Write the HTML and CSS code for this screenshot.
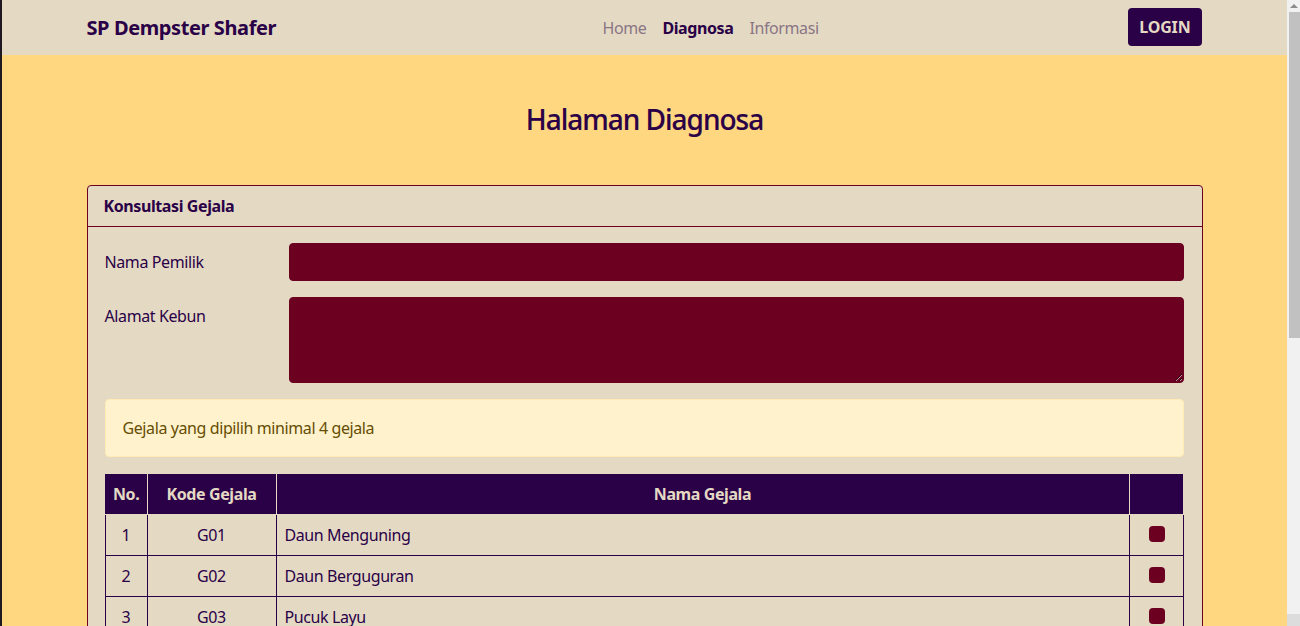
FILE: index.html
```html
<!DOCTYPE html>
<html lang="id">
<head>
<meta charset="utf-8">
<title>SP Dempster Shafer - Diagnosa</title>
<link rel="stylesheet" href="styles.css">
</head>
<body>
<nav class="navbar">
  <div class="container nav-inner">
    <a class="brand" href="#">SP Dempster Shafer</a>
    <ul class="nav-links">
      <li><a href="#">Home</a></li>
      <li><a href="#" class="active">Diagnosa</a></li>
      <li><a href="#">Informasi</a></li>
    </ul>
    <a class="btn-login" href="#">LOGIN</a>
  </div>
</nav>

<main class="page">
  <div class="container">
    <h1 class="page-title">Halaman Diagnosa</h1>

    <section class="card">
      <div class="card-header">Konsultasi Gejala</div>
      <div class="card-body">
        <div class="form-row">
          <label class="form-label" for="nama">Nama Pemilik</label>
          <input class="form-control" id="nama" type="text">
        </div>
        <div class="form-row">
          <label class="form-label" for="alamat">Alamat Kebun</label>
          <textarea class="form-control textarea" id="alamat"></textarea>
        </div>

        <div class="alert">Gejala yang dipilih minimal 4 gejala</div>

        <table class="table">
          <colgroup>
            <col class="col-no">
            <col class="col-kode">
            <col>
            <col class="col-check">
          </colgroup>
          <thead>
            <tr>
              <th>No.</th>
              <th>Kode Gejala</th>
              <th>Nama Gejala</th>
              <th></th>
            </tr>
          </thead>
          <tbody>
            <tr><td class="c">1</td><td class="c">G01</td><td>Daun Menguning</td><td class="c"><span class="check"></span></td></tr>
            <tr><td class="c">2</td><td class="c">G02</td><td>Daun Berguguran</td><td class="c"><span class="check"></span></td></tr>
            <tr><td class="c">3</td><td class="c">G03</td><td>Pucuk Layu</td><td class="c"><span class="check"></span></td></tr>
            <tr><td class="c">4</td><td class="c">G04</td><td>Batang Membusuk</td><td class="c"><span class="check"></span></td></tr>
            <tr><td class="c">5</td><td class="c">G05</td><td>Akar Membusuk</td><td class="c"><span class="check"></span></td></tr>
            <tr><td class="c">6</td><td class="c">G06</td><td>Bercak Coklat pada Daun</td><td class="c"><span class="check"></span></td></tr>
            <tr><td class="c">7</td><td class="c">G07</td><td>Buah Rontok</td><td class="c"><span class="check"></span></td></tr>
            <tr><td class="c">8</td><td class="c">G08</td><td>Daun Menggulung</td><td class="c"><span class="check"></span></td></tr>
            <tr><td class="c">9</td><td class="c">G09</td><td>Ranting Mengering</td><td class="c"><span class="check"></span></td></tr>
            <tr><td class="c">10</td><td class="c">G10</td><td>Kulit Batang Pecah</td><td class="c"><span class="check"></span></td></tr>
            <tr><td class="c">11</td><td class="c">G11</td><td>Buah Busuk</td><td class="c"><span class="check"></span></td></tr>
            <tr><td class="c">12</td><td class="c">G12</td><td>Tanaman Kerdil</td><td class="c"><span class="check"></span></td></tr>
          </tbody>
        </table>
        <button class="btn-submit" type="button">Diagnosa</button>
      </div>
    </section>
  </div>
</main>
<div class="scrollbar" aria-hidden="true">
  <span class="sb-up"></span>
  <span class="sb-thumb"></span>
  <span class="sb-down"></span>
</div>
</body>
</html>
```

FILE: styles.css
```css
* { box-sizing: border-box; }

html { background: #ffd780; }

body {
  margin: 0;
  border-left: 2px solid #1e1822;
  border-right: 13px solid #f1f1f1;
  font-family: "Noto Sans", "Open Sans", sans-serif;
  font-size: 16px;
  line-height: 1.5;
  letter-spacing: -0.025em;
  color: #2a0047;
  background: #ffd780;
}

/* imitation of the browser's scrollbar, drawn over the right edge */
.scrollbar {
  position: fixed;
  top: 0;
  right: 0;
  width: 13px;
  height: 100vh;
  background: #f1f1f1;
  display: flex;
  flex-direction: column;
  align-items: stretch;
}
.sb-up {
  height: 12px;
  position: relative;
}
.sb-up::before {
  content: "";
  position: absolute;
  left: 3px;
  top: 4px;
  border-left: 4px solid transparent;
  border-right: 4px solid transparent;
  border-bottom: 4px solid #8c8c8c;
}
.sb-thumb {
  height: 326px;
  margin-left: 2px;
  background: #c1c1c1;
}
.sb-down {
  margin-top: auto;
  height: 12px;
  background: #dcdcdc;
}

a { text-decoration: none; }

.container {
  max-width: 1140px;
  margin: 0 auto;
  padding: 0 12px;
}

/* navbar */
.navbar {
  background: #e4dac4;
  height: 55px;
}
.nav-inner {
  height: 55px;
  display: flex;
  align-items: center;
}
.brand {
  font-size: 20px;
  font-weight: 700;
  color: #2a0047;
  width: 508px;
  flex: none;
}
.nav-links {
  list-style: none;
  margin: 0;
  padding: 0;
  display: flex;
}
.nav-links a {
  display: block;
  padding: 8px;
  color: #8a7585;
  font-size: 16px;
}
.nav-links a.active {
  color: #2a0047;
  font-weight: 700;
}
.btn-login {
  margin-left: auto;
  margin-right: 1px;
  display: block;
  background: #2a0047;
  color: #e4dac4;
  font-weight: 700;
  font-size: 16px;
  letter-spacing: -0.01em;
  padding: 6px 11px;
  border-radius: 4px;
  line-height: 26px;
  margin-top: -1px;
}

/* page */
.page { padding: 48px 0; }

.page-title {
  margin: 0 0 48px;
  text-align: center;
  font-size: 28px;
  font-weight: 500;
  line-height: 1.2;
  letter-spacing: -0.036em;
  color: #2a0047;
  -webkit-text-stroke: 0.15px #2a0047;
}

.card {
  background: #e4dac4;
  border: 1px solid #6b0020;
  border-radius: 4px;
}
.card-header {
  padding: 8px 16px;
  border-bottom: 1px solid #6b0020;
  font-weight: 700;
  line-height: 24px;
}
.card-body {
  padding: 16px 18px 16px 17px;
}

.form-row {
  display: grid;
  grid-template-columns: 184px 1fr;
  margin-bottom: 16px;
}
.form-label {
  padding-top: 7px;
  line-height: 24px;
}
.form-control {
  display: block;
  width: 100%;
  height: 38px;
  background: #6b0020;
  border: 1px solid #6b0020;
  border-radius: 4px;
  color: #e4dac4;
  font: inherit;
  padding: 6px 12px;
}
.textarea {
  height: 86px;
  resize: vertical;
}

.alert {
  background: #fff2cc;
  border: 1px solid #ffecb5;
  color: #664d03;
  border-radius: 4px;
  padding: 16px 17px;
  line-height: 24px;
  margin: 1px 0 17px;
}

.table {
  width: 100%;
  table-layout: fixed;
  border-collapse: collapse;
  margin-bottom: 16px;
}
.col-no { width: 42px; }
.col-kode { width: 129px; }
.col-check { width: 54px; }
.table th {
  background: #2a0047;
  color: #e4dac4;
  font-weight: 700;
  height: 40px;
  padding: 8px;
  border: 1px solid #e4dac4;
  border-top: 0;
  line-height: 24px;
}
.table th:first-child { border-left: 0; }
.table th:last-child { border-right: 0; }
.table td {
  border: 1px solid #2a0047;
  padding: 8px;
  height: 41px;
  line-height: 24px;
  vertical-align: middle;
}
.table td.c { text-align: center; }

.check {
  display: block;
  width: 16px;
  height: 16px;
  margin: -1px auto 1px;
  background: #6b0020;
  border-radius: 4px;
  position: relative;
  left: 1px;
}

.btn-submit {
  font: inherit;
  font-weight: 700;
  background: #2a0047;
  color: #e4dac4;
  border: 0;
  border-radius: 4px;
  padding: 6px 12px;
}
```
